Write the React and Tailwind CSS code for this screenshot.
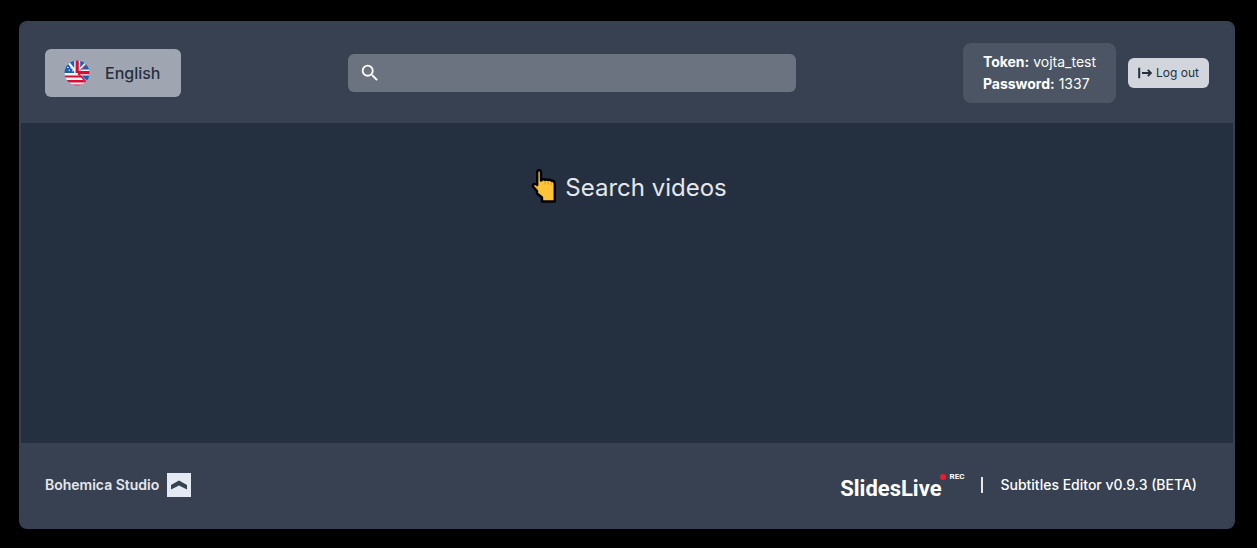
function FlagIcon() {
  return (
    <svg viewBox="0 0 26 26" className="size-[26px]" aria-hidden="true">
      <defs>
        <clipPath id="flag-circle">
          <circle cx="13" cy="13" r="12.5" />
        </clipPath>
      </defs>
      <g clipPath="url(#flag-circle)">
        <rect width="26" height="26" fill="#1d5fb4" />
        <path d="M4 2 12 12M23 2 14 11.5M15 15 24 23" stroke="#f3f4f8" strokeWidth="2.2" />
        <path d="M13.2 0V13M13 12.6H26" stroke="#f3f4f8" strokeWidth="6" />
        <path d="M23.500 3 16 10.500" stroke="#d80f35" strokeWidth="1" />
        <path d="M13.2 0V12.6H26" stroke="#d80f35" strokeWidth="3.2" fill="none" />
        <path d="M0 13H14L24 23V26H0Z" fill="#f3f4f8" />
        <path d="M0 15.500H16.500L18.500 17.500H0ZM0 20H19.500L22 22.500H0ZM4 24.500H22V26H4Z" fill="#d80f35" />
        <path d="M14 13.500 23 22.500" stroke="#d80f35" strokeWidth="1.600" />
        <path d="M3 7.500h1.500M6.500 8h1.500M4.500 10.300h1.500M8 10.800h1.500" stroke="#f3f4f8" strokeWidth="1.100" />
      </g>
    </svg>
  );
}

function SearchIcon() {
  return (
    <svg viewBox="0 0 24 24" className="size-[22px] shrink-0" fill="currentColor" aria-hidden="true">
      <path d="M15.5 14h-.79l-.28-.27A6.471 6.471 0 0 0 16 9.5 6.5 6.5 0 1 0 9.5 16c1.61 0 3.09-.59 4.23-1.57l.27.28v.79l5 4.99L20.49 19l-4.99-5zm-6 0C7.01 14 5 11.99 5 9.5S7.01 5 9.5 5 14 7.01 14 9.5 11.99 14 9.5 14z" />
    </svg>
  );
}

function LogoutIcon() {
  return (
    <svg viewBox="0 0 14 12" className="h-3 w-3.5" fill="none" stroke="currentColor" aria-hidden="true">
      <path d="M1.200 .8V11.200" strokeWidth="2" />
      <path d="M4 6H13M9.8 2.8 13 6 9.8 9.2" strokeWidth="1.800" />
    </svg>
  );
}

function PointingHand() {
  return (
    <svg viewBox="0 0 26 36" className="h-9 w-[26px]" aria-hidden="true">
      <path
        d="M6.2 3.500Q6.2 1.200 8.100 1.200T10 3.500V11.500L11.500 10.500Q13 10 14 10.800Q15.800 10 17 11Q19 10.300 20 11.500Q23.800 11.500 23.800 15.500V32.500H11V28.500L6 24.500V22L2 17.500Q1.500 15 3.800 15L6.200 16Z"
        fill="#fdc535"
        stroke="#000"
        strokeWidth="2.400"
        strokeLinejoin="round"
      />
      <path d="M14 12V15.500M17.200 12V15.500M20.300 13V16" stroke="#d99524" strokeWidth="0.900" />
      <path d="M3.200 16 7 17.500V20Z" fill="#e89b20" />
    </svg>
  );
}

export default function App() {
  return (
    <div className="min-h-screen bg-black pt-[21px] pr-[22px] pb-[19px] pl-[19px] font-['Inter',sans-serif]">
      <div className="overflow-hidden rounded-lg border-2 border-[#374151] bg-[#242f3f]">
        <header className="flex items-center justify-between gap-6 bg-[#374151] px-6 py-5">
          <button type="button" className="flex h-12 items-center gap-[15px] rounded-md bg-[#9fa6b2] pr-5 pl-[19px] text-base font-medium text-[#252f3f]">
            <FlagIcon />
            English
          </button>
          <label className="flex h-[38px] w-full max-w-md items-center gap-2 rounded-md bg-[#6b7280] px-[11px] text-white">
            <SearchIcon />
            <input type="search" aria-label="Search videos" className="min-w-0 flex-1 bg-transparent text-base outline-none" />
          </label>
          <div className="flex shrink-0 items-center gap-3">
            <div className="rounded-lg bg-[#4b5563] px-5 py-2 text-sm leading-[22px] text-white">
              <p><strong>Token:</strong> vojta_test</p>
              <p><strong>Password:</strong> 1337</p>
            </div>
            <button type="button" className="flex h-[30px] items-center gap-1 rounded-md bg-[#d2d6dc] px-2.5 text-xs text-[#252f3f]">
              <LogoutIcon />
              Log out
            </button>
          </div>
        </header>
        <main className="flex min-h-80 justify-center pt-[46px]">
          <h1 className="flex h-9 items-center gap-2 pl-1 text-2xl text-[#e5e7eb]">
            <PointingHand />
            <span className="pt-0.5">Search videos</span>
          </h1>
        </main>
        <footer className="flex h-[84px] items-center justify-between bg-[#374151] px-6">
          <div className="flex items-center gap-2 text-sm font-semibold text-[#e5e7eb]">
            Bohemica Studio
            <svg viewBox="0 0 24 24" className="size-6" aria-hidden="true">
              <rect width="24" height="24" fill="#e5eaf2" />
              <path d="M4 12 12 7.500 20 12V16.500L12 12.500 4 16.500Z" fill="#374151" />
            </svg>
          </div>
          <div className="flex items-center pr-3 text-sm font-medium text-white">
            <div className="flex items-start gap-1 font-['Roboto',sans-serif]">
              <span className="pt-2 text-[22px] leading-6 font-bold">SlidesLive</span>
              <span className="-ml-1.5 flex items-center gap-1 text-[8px] leading-4 font-bold">
                <span className="size-1.5 rounded-full bg-[#ed1c2e]" />
                REC
              </span>
            </div>
            <span className="mx-[17px] h-4 w-0.5 bg-[#e5e7eb]" />
            <span>Subtitles Editor v0.9.3 (BETA)</span>
          </div>
        </footer>
      </div>
    </div>
  );
}
